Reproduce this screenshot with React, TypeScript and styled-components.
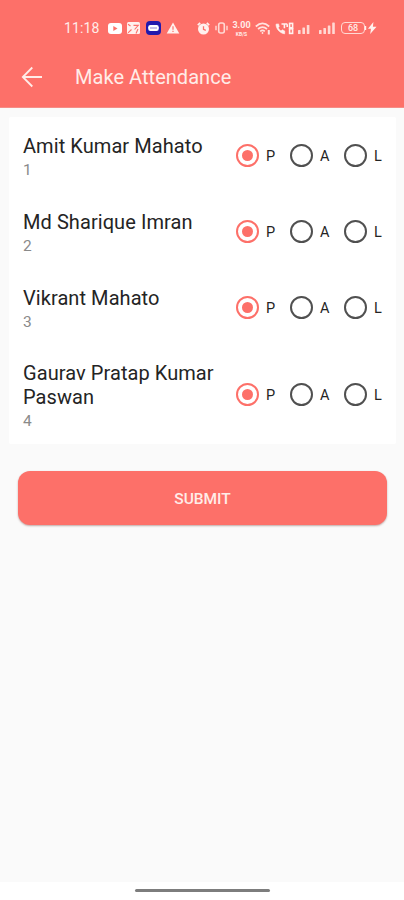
import React, { useState } from 'react';
import styled, { createGlobalStyle } from 'styled-components';

const coral = '#fd7069';

const GlobalStyle = createGlobalStyle`
  * { box-sizing: border-box; }
  body { margin: 0; background: #fafafa; font-family: Roboto, sans-serif; }
`;

const Screen = styled.div`
  width: 404px;
  height: 900px;
  display: flex;
  flex-direction: column;
  background: #fafafa;
  overflow: hidden;
`;

const Header = styled.header`
  height: 108px;
  flex: none;
  background: ${coral};
  color: #ffece8;
  border-bottom: 1px solid #f58d87;
`;

const StatusBar = styled.div`
  height: 56px;
  padding-left: 64px;
  display: flex;
  align-items: center;
`;

const Clock = styled.span`
  width: 44px;
  font-size: 14px;
  letter-spacing: 0.1px;
  line-height: 16px;
`;

const StatusIcon = styled.svg<{ $gap?: number }>`
  display: block;
  flex: none;
  margin-right: ${(p) => p.$gap ?? 4}px;
`;

const NetSpeed = styled.div`
  width: 19px;
  margin-right: 4px;
  display: flex;
  flex-direction: column;
  align-items: center;
  font-weight: 700;
  font-size: 9px;
  line-height: 11px;
`;

const SpeedUnit = styled.span`
  font-size: 5px;
  line-height: 6px;
`;

const Battery = styled.div`
  width: 24px;
  height: 12px;
  border: 1px solid #ffd9d4;
  border-radius: 4px;
  font-size: 9px;
  font-weight: 500;
  line-height: 10px;
  text-align: center;
`;

const Toolbar = styled.div`
  height: 42px;
  padding-left: 21px;
  display: flex;
  align-items: center;
`;

const BackButton = styled.button`
  width: 22px;
  height: 22px;
  margin-right: 32px;
  padding: 0;
  border: 0;
  background: none;
  color: inherit;
`;

const Title = styled.h1`
  margin: 0;
  font-size: 20px;
  line-height: 24px;
  font-weight: 400;
  letter-spacing: 0.04px;
`;

const Card = styled.main`
  margin: 9px 8px 0 9px;
  background: #fff;
  border-radius: 2px;
`;

const Row = styled.div`
  display: flex;
  align-items: center;
  padding: 18px 12px 12.8px 14px;
`;

const Person = styled.div`
  width: 213px;
  flex: none;
`;

const Name = styled.div`
  width: 200px;
  font-size: 20px;
  line-height: 23.4px;
  letter-spacing: 0.07px;
  color: #242424;
`;

const Roll = styled.div`
  padding-top: 3px;
  font-size: 15.5px;
  line-height: 18.6px;
  color: #8a8a8a;
`;

const Choices = styled.div`
  display: flex;
  margin-top: -4px;
`;

const Choice = styled.button`
  width: 54px;
  padding: 0;
  border: 0;
  background: none;
  display: flex;
  align-items: center;
  gap: 7px;
  font: 400 14.5px/20px Roboto, sans-serif;
  color: #242424;
  &:last-child { width: 36px; }
`;

const ChoiceLabel = styled.span`
  padding-top: 3px;
`;

const Ring = styled.span<{ $on: boolean }>`
  width: 23px;
  height: 23px;
  flex: none;
  display: grid;
  place-items: center;
  border: 2px solid ${(p) => (p.$on ? coral : '#505050')};
  border-radius: 50%;
  &::after {
    content: '';
    width: 11px;
    height: 11px;
    border-radius: 50%;
    background: ${(p) => (p.$on ? coral : 'transparent')};
  }
`;

const Submit = styled.button`
  margin: 27.2px 17px 0 18px;
  padding: 2px 0 0;
  height: 54px;
  flex: none;
  border: 0;
  border-radius: 12px;
  background: ${coral};
  box-shadow: 0 1px 2px rgba(120, 70, 65, 0.45);
  color: #ffece8;
  font: 500 15.5px/20px Roboto, sans-serif;
`;

const NavBar = styled.footer`
  height: 18px;
  margin-top: auto;
  flex: none;
  display: flex;
  justify-content: center;
  padding: 7px 0 0 1px;
  background: #fff;
`;

const Handle = styled.div`
  width: 135px;
  height: 3px;
  border-radius: 2px;
  background: #7d7d7d;
`;

const SignalIcon = ({ w, gap, heights }: { w: number; gap: number; heights: number[] }) => (
  <StatusIcon $gap={gap} width={w} height="12" viewBox={`0 0 ${w} 12`} fill="#ffd9d4">
    {heights.map((h, i) => (
      <rect key={i} x={i * 4.4} y={12 - h} width="2.6" height={h} rx="0.6" />
    ))}
  </StatusIcon>
);

const StatusIcons = () => (
  <>
    <StatusIcon $gap={5} width="14" height="11" viewBox="0 0 14 11">
      <rect width="14" height="11" rx="3" fill="#fff" />
      <path d="M5.3 3v5l4.2-2.5z" fill={coral} />
    </StatusIcon>
    <StatusIcon $gap={5} width="14" height="12" viewBox="0 0 14 12">
      <rect width="13" height="12" rx="1.5" fill="#fff1ee" />
      <path d="M1 2.2 3.5 4M6.5 3.4h4.8L7.6 7.5M1 10.8 4.5 7.5M11 7 9 11.5" stroke={coral} strokeWidth="1.1" fill="none" />
    </StatusIcon>
    <StatusIcon $gap={5} width="15" height="14" viewBox="0 0 15 14">
      <rect width="15" height="14" rx="4" fill="#2119ad" />
      <rect x="2.2" y="4" width="10.6" height="6" rx="2.2" fill="#fff" />
      <path d="M4 7h7" stroke="#8d86d2" strokeWidth="1" />
    </StatusIcon>
    <StatusIcon $gap={17} width="14" height="12" viewBox="0 0 14 12">
      <path d="M7 .5 13.3 11.5H.7z" fill="#fff1ee" />
      <path d="M7 4.3v3.4M7 8.7V10" stroke={coral} strokeWidth="1.2" />
    </StatusIcon>
    <StatusIcon $gap={5} width="13" height="13" viewBox="0 0 13 13" fill="none">
      <circle cx="6.5" cy="7" r="5.5" fill="#fff1ee" />
      <path d="M.8 3.2 3.2.9M12.2 3.2 9.8.9" stroke="#fff1ee" strokeWidth="1.7" />
      <path d="M6.5 4.2v3.2l2.3 1" stroke={coral} strokeWidth="1.3" />
    </StatusIcon>
    <StatusIcon $gap={4} width="13" height="12" viewBox="0 0 13 12" fill="none" stroke="#ffd9d4">
      <rect x="3.7" y="1" width="5.6" height="10" rx="2" strokeWidth="1.6" />
      <path d="M1 3.7v4.6M12 3.7v4.6" strokeWidth="1.4" />
    </StatusIcon>
    <NetSpeed>
      <span>3.00</span>
      <SpeedUnit>KB/S</SpeedUnit>
    </NetSpeed>
    <StatusIcon $gap={4} width="16" height="13" viewBox="0 0 16 13" fill="none" stroke="#ffe3df" strokeWidth="1.7">
      <path d="M.8 4.5Q7.5-1.6 14.2 4.5M3 7q4.5-3.8 9 0M5.2 9.3q2.3-1.8 4.6 0" />
      <circle cx="7.5" cy="11" r=".9" fill="#ffe3df" stroke="none" />
      <path d="M13.8 8v4.5" strokeWidth="2" />
    </StatusIcon>
    <StatusIcon $gap={4} width="19" height="13" viewBox="0 0 19 13" fill="none" stroke="#fff1ee">
      <path d="M1 2.2C1 7 5 11.3 9.7 11.8V9L7.3 7.8 6 9C4.6 8 3.8 7 3.2 5.8l1-1.2L3.5 1.9z" fill="#fff1ee" strokeWidth=".6" />
      <path d="M6.5 2h5.8M9.4 2.2v4M12.2 2.2v2.8" strokeWidth="1.6" />
      <rect x="14.6" y="1.4" width="3" height="4.4" strokeWidth="1.6" />
      <rect x="14.6" y="6.8" width="3" height="4.6" strokeWidth="1.6" />
    </StatusIcon>
    <SignalIcon w={13} gap={8} heights={[4, 6.5, 9]} />
    <SignalIcon w={17} gap={5} heights={[4, 6, 8.5, 11.5]} />
    <Battery>68</Battery>
    <StatusIcon $gap={0} width="12" height="12" viewBox="0 0 12 12" fill="#fff1ee">
      <path d="M0 4h1.2v4H0zM8.4 0 3 6.8h3L5.2 12l6.3-7.3H7.9z" />
    </StatusIcon>
  </>
);

const students = ['Amit Kumar Mahato', 'Md Sharique Imran', 'Vikrant Mahato', 'Gaurav Pratap Kumar Paswan'];
const options = ['P', 'A', 'L'];

export default function App() {
  const [marks, setMarks] = useState<string[]>(students.map(() => 'P'));
  const mark = (index: number, value: string) =>
    setMarks((current) => current.map((m, i) => (i === index ? value : m)));

  return (
    <Screen>
      <GlobalStyle />
      <Header>
        <StatusBar>
          <Clock>11:18</Clock>
          <StatusIcons />
        </StatusBar>
        <Toolbar>
          <BackButton aria-label="Back">
            <svg width="22" height="22" viewBox="0 0 22 22" fill="none" stroke="currentColor" strokeWidth="1.8">
              <path d="M21 11H2M11.3 1.5 1.8 11l9.5 9.5" />
            </svg>
          </BackButton>
          <Title>Make Attendance</Title>
        </Toolbar>
      </Header>
      <Card>
        {students.map((name, index) => (
          <Row key={name}>
            <Person>
              <Name>{name}</Name>
              <Roll>{index + 1}</Roll>
            </Person>
            <Choices role="radiogroup">
              {options.map((option) => (
                <Choice
                  key={option}
                  role="radio"
                  aria-checked={marks[index] === option}
                  onClick={() => mark(index, option)}
                >
                  <Ring $on={marks[index] === option} />
                  <ChoiceLabel>{option}</ChoiceLabel>
                </Choice>
              ))}
            </Choices>
          </Row>
        ))}
      </Card>
      <Submit>SUBMIT</Submit>
      <NavBar>
        <Handle />
      </NavBar>
    </Screen>
  );
}
